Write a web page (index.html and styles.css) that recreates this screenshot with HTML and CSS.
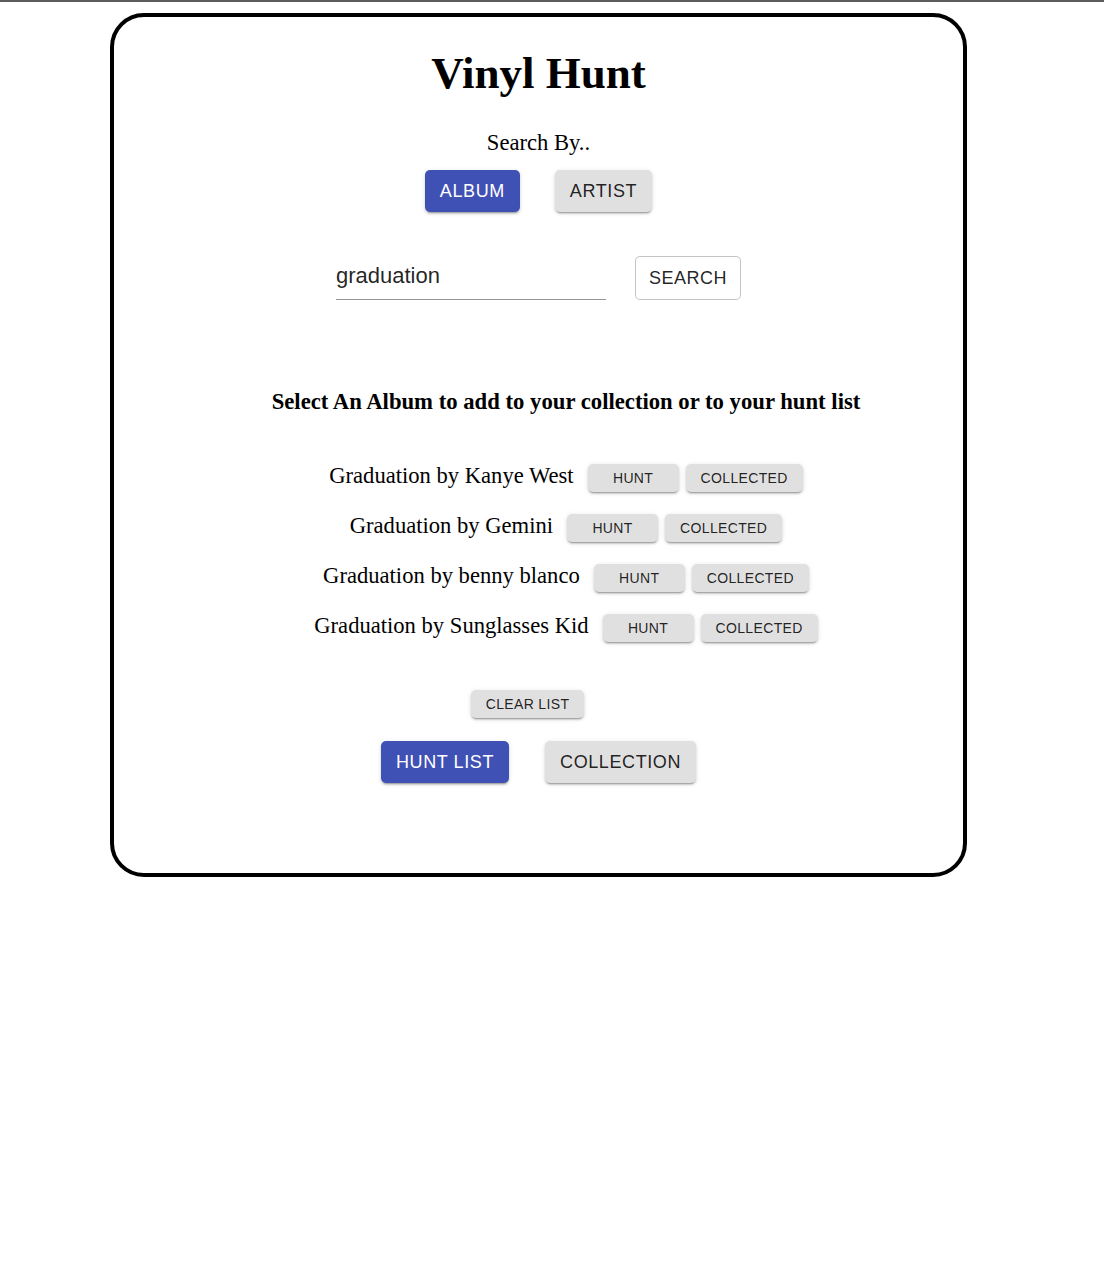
FILE: index.html
```html
<!DOCTYPE html>
<html lang="en">
<head>
<meta charset="utf-8">
<title>Vinyl Hunt</title>
<link rel="stylesheet" href="styles.css">
</head>
<body>
<div class="topline"></div>
<main class="card">
  <h1 class="title">Vinyl Hunt</h1>
  <p class="search-by">Search By..</p>
  <div class="toggle-row">
    <button class="btn btn-lg btn-primary">ALBUM</button>
    <button class="btn btn-lg btn-grey">ARTIST</button>
  </div>
  <div class="search-row">
    <div class="field"><span class="field-value">graduation</span></div>
    <button class="btn btn-outlined">SEARCH</button>
  </div>
  <section class="results">
    <h3 class="results-heading">Select An Album to add to your collection or to your hunt list</h3>
    <div class="row"><span class="row-text">Graduation by Kanye West</span><button class="btn btn-sm btn-grey btn-hunt">HUNT</button><button class="btn btn-sm btn-grey">COLLECTED</button></div>
    <div class="row"><span class="row-text">Graduation by Gemini</span><button class="btn btn-sm btn-grey btn-hunt">HUNT</button><button class="btn btn-sm btn-grey">COLLECTED</button></div>
    <div class="row"><span class="row-text">Graduation by benny blanco</span><button class="btn btn-sm btn-grey btn-hunt">HUNT</button><button class="btn btn-sm btn-grey">COLLECTED</button></div>
    <div class="row"><span class="row-text">Graduation by Sunglasses Kid</span><button class="btn btn-sm btn-grey btn-hunt">HUNT</button><button class="btn btn-sm btn-grey">COLLECTED</button></div>
  </section>
  <div class="clear-row">
    <button class="btn btn-sm btn-grey">CLEAR LIST</button>
  </div>
  <div class="list-row">
    <button class="btn btn-lg btn-primary">HUNT LIST</button>
    <button class="btn btn-lg btn-grey">COLLECTION</button>
  </div>
</main>
</body>
</html>
```
FILE: styles.css
```css
* { box-sizing: border-box; }

html, body {
  margin: 0;
  padding: 0;
  background: #ffffff;
}

body {
  font-family: "Liberation Serif", "Times New Roman", serif;
  font-size: 22.6px;
  line-height: 26px;
  color: #000;
}

.topline {
  height: 2px;
  background: #5c5c5c;
}

.card {
  margin: 11px 0 0 110px;
  width: 857px;
  border: 4px solid #000;
  border-radius: 34px;
  padding: 30px 0 90px;
  display: flex;
  flex-direction: column;
  align-items: center;
}

.title {
  margin: 0;
  font-size: 45px;
  line-height: 52px;
  font-weight: 700;
  text-align: center;
}

.search-by {
  margin: 31px 0 0;
  text-align: center;
}

.toggle-row {
  margin-top: 14px;
  display: flex;
  justify-content: center;
  gap: 35px;
}

.btn {
  font-family: "Liberation Sans", Arial, Helvetica, sans-serif;
  border: none;
  border-radius: 5px;
  cursor: pointer;
  color: rgba(0, 0, 0, 0.87);
  white-space: nowrap;
}

.btn-lg {
  font-size: 18px;
  line-height: 30px;
  letter-spacing: 0.6px;
  padding: 6px 15px;
  height: 42px;
  font-weight: 400;
}

.btn-sm {
  font-size: 14px;
  line-height: 18px;
  letter-spacing: 0.35px;
  padding: 5px 15px;
  height: 28px;
}

.btn-primary {
  background: #3f51b5;
  color: #ffffff;
  box-shadow: 0 3px 1px -2px rgba(0,0,0,0.2), 0 2px 2px 0 rgba(0,0,0,0.14), 0 1px 5px 0 rgba(0,0,0,0.12);
}

.btn-grey {
  background: #e0e0e0;
  box-shadow: 0 3px 1px -2px rgba(0,0,0,0.2), 0 2px 2px 0 rgba(0,0,0,0.14), 0 1px 5px 0 rgba(0,0,0,0.12);
}

.btn-outlined {
  background: #fff;
  border: 1px solid rgba(0, 0, 0, 0.23);
  font-size: 18px;
  line-height: 30px;
  letter-spacing: 0.5px;
  padding: 6px 13px;
  height: 44px;
}

.search-row {
  margin-top: 44px;
  display: flex;
  align-items: flex-end;
  justify-content: center;
  gap: 29px;
}

.field {
  width: 270px;
  padding: 6px 0 10px;
  border-bottom: 1px solid rgba(0, 0, 0, 0.42);
  font-family: "Liberation Sans", Arial, Helvetica, sans-serif;
  font-size: 22px;
  line-height: 26px;
  color: rgba(0, 0, 0, 0.87);
}

.results {
  align-self: stretch;
  padding-left: 55px;
  margin-top: 89px;
  display: flex;
  flex-direction: column;
  align-items: center;
}

.results-heading {
  margin: 0 0 48px;
  font-size: 22.7px;
  line-height: 26px;
  font-weight: 700;
  text-align: center;
}

.row {
  height: 50px;
  display: flex;
  align-items: baseline;
  justify-content: center;
}

.row-text {
  margin-right: 14px;
}

.btn-hunt {
  min-width: 91px;
  margin-right: 7px;
}

.clear-row {
  margin-top: 27px;
  display: flex;
  justify-content: center;
  padding-right: 22px;
}

.list-row {
  margin-top: 23px;
  display: flex;
  justify-content: center;
  gap: 36px;
}
```
